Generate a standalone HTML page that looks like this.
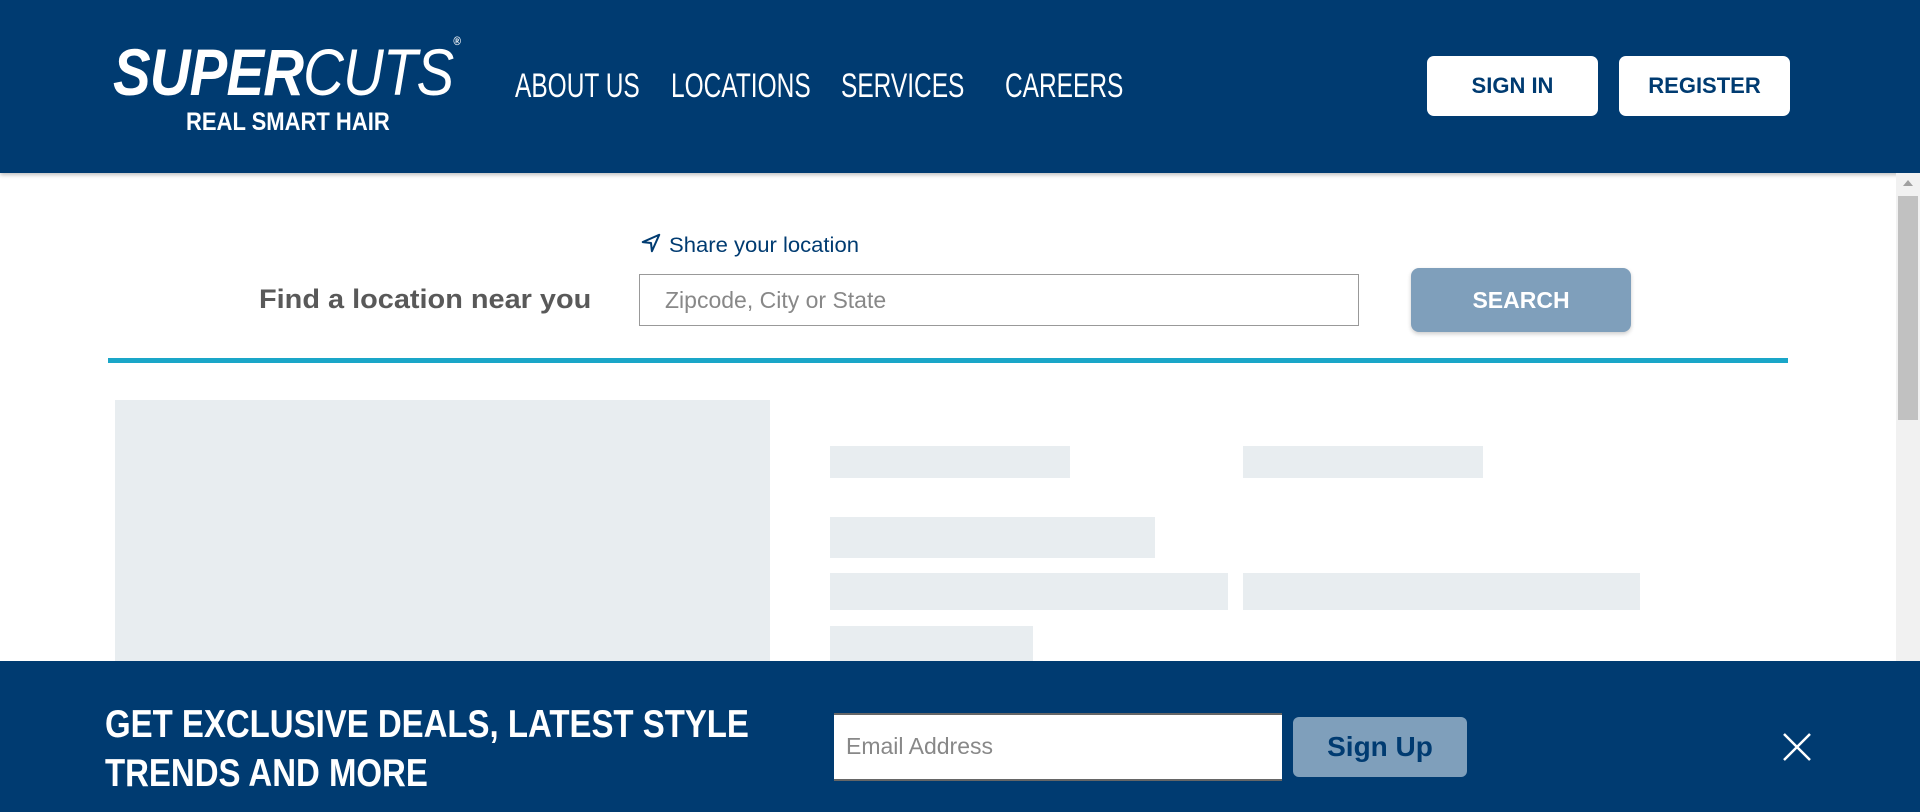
<!DOCTYPE html>
<html><head><meta charset="utf-8"><style>
*{margin:0;padding:0;box-sizing:border-box}
body{width:1920px;height:812px;overflow:hidden;background:#fff;font-family:"Liberation Sans",sans-serif;position:relative}
.abs{position:absolute}
header{position:absolute;left:0;top:0;width:1920px;height:173px;background:#003b71;box-shadow:0 2px 4px rgba(0,0,0,.25)}
.nav{color:#fff;font-size:34px;top:67px;transform:scaleX(.72);transform-origin:left;white-space:nowrap}
.btn{background:#fff;border-radius:7px;color:#003b71;font-weight:bold;font-size:22px;display:flex;align-items:center;justify-content:center}
.sk{background:#e8edf0;position:absolute}
</style></head><body>
<header>
  <div class="abs" style="left:113px;top:34px;color:#fff;font-size:66px;font-style:italic;font-weight:bold;transform:scaleX(.855);transform-origin:left;letter-spacing:-1px;white-space:nowrap">SUPER<span style="font-weight:normal">CUTS</span><sup style="font-size:12px;font-style:normal;vertical-align:top">®</sup></div>
  <div class="abs" style="left:186px;top:108px;color:#fff;font-size:25px;font-weight:bold;transform:scaleX(.88);transform-origin:left;white-space:nowrap">REAL SMART HAIR</div>
  <div class="abs nav" style="left:515px">ABOUT US</div>
  <div class="abs nav" style="left:671px">LOCATIONS</div>
  <div class="abs nav" style="left:841px">SERVICES</div>
  <div class="abs nav" style="left:1005px">CAREERS</div>
  <div class="abs btn" style="left:1427px;top:56px;width:171px;height:60px">SIGN IN</div>
  <div class="abs btn" style="left:1619px;top:56px;width:171px;height:60px">REGISTER</div>
</header>
<div class="abs" style="left:1896px;top:173px;width:24px;height:639px;background:#f1f1f1"></div>
<div class="abs" style="left:1898px;top:196px;width:20px;height:224px;background:#c1c1c1"></div>
<div class="abs" style="left:1903px;top:180px;width:0;height:0;border-left:5px solid transparent;border-right:5px solid transparent;border-bottom:6px solid #a0a0a0"></div>

<svg class="abs" style="left:640px;top:232px" width="22" height="22" viewBox="0 0 24 24"><path d="M21 3 L3 11 L12 12 L13 21 Z" fill="none" stroke="#003b71" stroke-width="2.2" stroke-linejoin="round"/></svg>
<div class="abs" style="left:669px;top:234px;color:#003b71;font-size:21px;transform:scaleX(1.05);transform-origin:left">Share your location</div>
<div class="abs" style="left:259px;top:284px;color:#595959;font-size:27px;font-weight:bold;transform:scaleX(1.07);transform-origin:left;white-space:nowrap">Find a location near you</div>
<div class="abs" style="left:639px;top:274px;width:720px;height:52px;border:1px solid #999;color:#888;font-size:23px;padding:12px 0 0 25px">Zipcode, City or State</div>
<div class="abs" style="left:1411px;top:268px;width:220px;height:64px;background:#7f9fbb;border-radius:8px;color:#fff;font-weight:bold;font-size:23px;display:flex;align-items:center;justify-content:center;box-shadow:0 2px 4px rgba(0,0,0,.2)">SEARCH</div>
<div class="abs" style="left:108px;top:358px;width:1680px;height:5px;background:#1aa6c8"></div>

<div class="sk" style="left:115px;top:400px;width:655px;height:300px"></div>
<div class="sk" style="left:830px;top:446px;width:240px;height:32px"></div>
<div class="sk" style="left:1243px;top:446px;width:240px;height:32px"></div>
<div class="sk" style="left:830px;top:517px;width:325px;height:41px"></div>
<div class="sk" style="left:830px;top:573px;width:398px;height:37px"></div>
<div class="sk" style="left:1243px;top:573px;width:397px;height:37px"></div>
<div class="sk" style="left:830px;top:626px;width:203px;height:40px"></div>

<div class="abs" style="left:0;top:661px;width:1920px;height:151px;background:#003b71"></div>
<div class="abs" style="left:105px;top:700px;color:#fff;font-size:39px;font-weight:bold;line-height:49px;transform:scaleX(.845);transform-origin:left;white-space:nowrap">GET EXCLUSIVE DEALS, LATEST STYLE<br>TRENDS AND MORE</div>
<div class="abs" style="left:834px;top:713px;width:448px;height:68px;background:#fff;border-top:2px solid #666;border-bottom:2px solid #666;color:#888;font-size:23px;padding:18px 0 0 12px">Email Address</div>
<div class="abs" style="left:1293px;top:717px;width:174px;height:60px;background:#7f9fbb;border-radius:6px;color:#003b71;font-weight:bold;font-size:28px;display:flex;align-items:center;justify-content:center">Sign Up</div>
<svg class="abs" style="left:1782px;top:732px" width="30" height="30" viewBox="0 0 30 30"><path d="M2 2 L28 28 M28 2 L2 28" stroke="#fff" stroke-width="2.5"/></svg>
</body></html>
